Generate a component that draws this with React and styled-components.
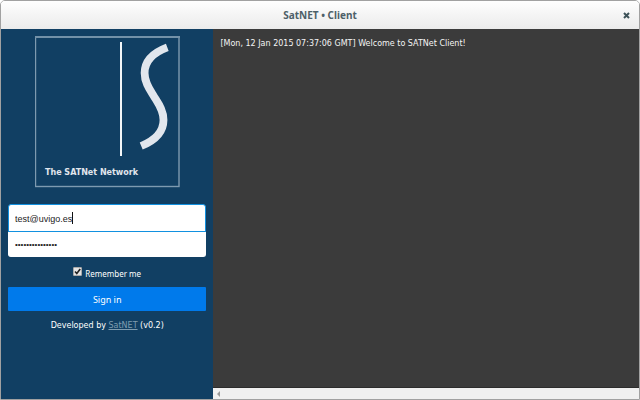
import React, { useState } from "react";
import styled, { createGlobalStyle } from "styled-components";

const GlobalStyle = createGlobalStyle`
  *, *::before, *::after { box-sizing: border-box; }
  body { margin: 0; background: #fff; font-family: "Noto Sans", sans-serif; font-size: 9px; }
  button, input { font: inherit; }
`;

const Window = styled.div`
  display: flex;
  flex-direction: column;
  min-height: 100vh;
  border: 1px solid #a1a1a1;
  border-radius: 5px 5px 0 0;
  overflow: hidden;
`;

const TitleBar = styled.header`
  display: grid;
  grid-template-columns: 1fr auto 1fr;
  align-items: center;
  height: 28px;
  padding: 0 8px;
  background: linear-gradient(#fefefe, #ebebeb);
`;

const Title = styled.h1`
  grid-column: 2;
  margin: 0;
  font-size: 10px;
  line-height: 14px;
  font-weight: 700;
  color: #4d6068;
`;

const CloseButton = styled.button`
  justify-self: end;
  display: flex;
  padding: 1px;
  border: 0;
  background: none;
  color: #3d5258;
`;

const Body = styled.div`
  display: flex;
  flex: 1;
`;

const Sidebar = styled.aside`
  display: flex;
  flex-direction: column;
  align-items: center;
  flex: 0 0 33.3%;
  padding: 7px;
  background: #113f63;
  color: #fff;
`;

const Logo = styled.svg`
  display: block;
  width: 145px;
  height: 152px;
`;

const LoginForm = styled.form`
  display: flex;
  flex-direction: column;
  align-items: center;
  width: 100%;
  margin-top: 16px;
`;

const FieldBox = styled.div`
  position: relative;
  width: 100%;
  display: flex;
  font-family: "Liberation Sans", sans-serif;
  color: #222;
`;

const Field = styled.input`
  width: 100%;
  height: ${(p) => (p.$position === "top" ? 28 : 25)}px;
  padding: ${(p) => (p.$position === "top" ? "1px 6px 0" : "0 6px")};
  border: 1px solid ${(p) => (p.$position === "top" ? "#1291e0" : "#fff")};
  border-top-width: ${(p) => (p.$position === "top" ? 1 : 0)}px;
  border-radius: ${(p) => (p.$position === "top" ? "3px 3px 0 0" : "0 0 3px 3px")};
  background: #fff;
  color: inherit;
  font-size: ${(p) => (p.$position === "top" ? 9 : 8)}px;
  caret-color: ${(p) => (p.$position === "top" ? "transparent" : "auto")};
  outline: none;
`;

const Caret = styled.span`
  position: absolute;
  top: 8px;
  left: 7px;
  height: 12px;
  border-right: 1px solid #111;
  pointer-events: none;
`;

const CaretText = styled.span`
  visibility: hidden;
  white-space: pre;
`;

const Remember = styled.label`
  display: flex;
  align-items: center;
  gap: 3px;
  height: 12px;
  margin: 10px 0 8px;
  font-size: 8px;
`;

const CheckboxFrame = styled.span`
  display: grid;
  margin-bottom: 3px;
  > * { grid-area: 1 / 1; }
`;

const Checkbox = styled.input`
  appearance: none;
  width: 9px;
  height: 9px;
  margin: 0;
  border: 1px solid #aaa;
  border-radius: 1px;
  background: #e4e4e4;
  & + svg { visibility: hidden; }
  &:checked + svg { visibility: visible; }
`;

const CheckMark = styled.svg`
  width: 9px;
  height: 9px;
  pointer-events: none;
`;

const SignInButton = styled.button`
  width: 100%;
  height: 24px;
  padding: 0;
  border: 0;
  border-radius: 1px;
  background: #007aeb;
  color: #fff;
`;

const Credit = styled.p`
  margin: 8px 0;
  font-family: "DejaVu Sans", sans-serif;
  font-size: 8px;
  line-height: 14px;
`;

const CreditLink = styled.a`
  color: #7f9cb0;
`;

const Main = styled.main`
  display: flex;
  flex-direction: column;
  flex: 1;
  min-width: 0;
  background: #3b3b3b;
`;

const Log = styled.div`
  flex: 1;
  padding: 8px 7px;
  border-bottom: 1px solid #2c2c2c;
  font-family: "DejaVu Sans", sans-serif;
  font-size: 8px;
  line-height: 14px;
  color: #f4f4f4;
`;

const ScrollBar = styled.div`
  display: flex;
  align-items: center;
  height: 11px;
  padding: 0 4px;
  background: #f0f0f0;
`;

const ScrollButton = styled.button`
  display: flex;
  padding: 0;
  border: 0;
  background: none;
  color: #999;
`;

export default function App() {
  const [email, setEmail] = useState("test@uvigo.es");
  const [password, setPassword] = useState("satnetclient015");
  const [remember, setRemember] = useState(true);

  return (
    <>
      <GlobalStyle />
      <Window>
        <TitleBar>
          <Title>SatNET • Client</Title>
          <CloseButton type="button" aria-label="Close">
            <svg width="7" height="7" viewBox="0 0 7 7">
              <path d="M1 1 6 6M6 1 1 6" stroke="currentColor" strokeWidth="2" />
            </svg>
          </CloseButton>
        </TitleBar>
        <Body>
          <Sidebar>
            <Logo viewBox="0 0 145 152" role="img" aria-label="The SATNet Network">
              <rect x="0.5" y="1" width="143.5" height="149.5" fill="none" stroke="#7e9ab0" strokeWidth="1.4" />
              <path d="M0 1H145" stroke="#7391a8" strokeWidth="2" />
              <path d="M86 6V120" stroke="#f3f6f8" strokeWidth="2" />
              <path
                d="M132.3 11.3C117 17 109.6 26 109.6 37C109.6 47 115 54 119 60.5C123 67 128.5 74 128.5 84C128.5 95 121 104 106.2 110"
                fill="none"
                stroke="#e1e6ed"
                strokeWidth="7.8"
              />
              <text x="10" y="139" fill="#e1e6ed" fontFamily="DejaVu Sans, sans-serif" fontSize="8" fontWeight="700">
                The SATNet Network
              </text>
            </Logo>
            <LoginForm onSubmit={(e) => e.preventDefault()}>
              <FieldBox>
                <Field
                  $position="top"
                  type="text"
                  aria-label="Email"
                  value={email}
                  onChange={(e) => setEmail(e.target.value)}
                />
                <Caret aria-hidden="true">
                  <CaretText>{email}</CaretText>
                </Caret>
              </FieldBox>
              <FieldBox>
                <Field
                  $position="bottom"
                  type="password"
                  aria-label="Password"
                  value={password}
                  onChange={(e) => setPassword(e.target.value)}
                />
              </FieldBox>
              <Remember>
                <CheckboxFrame>
                  <Checkbox type="checkbox" checked={remember} onChange={(e) => setRemember(e.target.checked)} />
                  <CheckMark viewBox="0 0 9 9">
                    <path d="M2 4.5 3.8 6.5 7.2 2" fill="none" stroke="#222" strokeWidth="1.6" />
                  </CheckMark>
                </CheckboxFrame>
                Remember me
              </Remember>
              <SignInButton type="submit">Sign in</SignInButton>
            </LoginForm>
            <Credit>
              Developed by <CreditLink href="#satnet">SatNET</CreditLink> (v0.2)
            </Credit>
          </Sidebar>
          <Main>
            <Log>[Mon, 12 Jan 2015 07:37:06 GMT] Welcome to SATNet Client!</Log>
            <ScrollBar>
              <ScrollButton type="button" aria-label="Scroll left">
                <svg width="4" height="6" viewBox="0 0 4 6">
                  <path d="M0 3 3 0V6Z" fill="currentColor" />
                </svg>
              </ScrollButton>
            </ScrollBar>
          </Main>
        </Body>
      </Window>
    </>
  );
}
